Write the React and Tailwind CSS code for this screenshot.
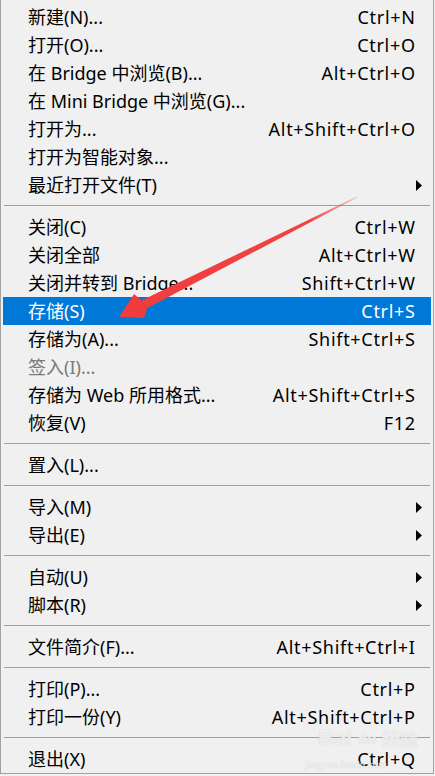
import React from "react";

const groups = [
  [
    { l: "新建(N)...", r: "Ctrl+N" },
    { l: "打开(O)...", r: "Ctrl+O" },
    { l: "在 Bridge 中浏览(B)...", r: "Alt+Ctrl+O" },
    { l: "在 Mini Bridge 中浏览(G)..." },
    { l: "打开为...", r: "Alt+Shift+Ctrl+O" },
    { l: "打开为智能对象..." },
    { l: "最近打开文件(T)", sub: true },
  ],
  [
    { l: "关闭(C)", r: "Ctrl+W" },
    { l: "关闭全部", r: "Alt+Ctrl+W" },
    { l: "关闭并转到 Bridge...", r: "Shift+Ctrl+W" },
    { l: "存储(S)", r: "Ctrl+S", active: true },
    { l: "存储为(A)...", r: "Shift+Ctrl+S" },
    { l: "签入(I)...", disabled: true },
    { l: "存储为 Web 所用格式...", r: "Alt+Shift+Ctrl+S" },
    { l: "恢复(V)", r: "F12" },
  ],
  [{ l: "置入(L)..." }],
  [
    { l: "导入(M)", sub: true },
    { l: "导出(E)", sub: true },
  ],
  [
    { l: "自动(U)", sub: true },
    { l: "脚本(R)", sub: true },
  ],
  [{ l: "文件简介(F)...", r: "Alt+Shift+Ctrl+I" }],
  [
    { l: "打印(P)...", r: "Ctrl+P" },
    { l: "打印一份(Y)", r: "Alt+Shift+Ctrl+P" },
  ],
  [{ l: "退出(X)", r: "Ctrl+Q" }],
];

function Row({ it }) {
  const cls = it.active
    ? "bg-[#0078d7] text-white"
    : it.disabled
    ? "text-[#7a7a7a]"
    : "text-black";
  return (
    <div className={`flex h-[28px] items-center pl-[25px] pr-[16px] ${cls}`}>
      <span className="flex-1 whitespace-nowrap">{it.l}</span>
      {it.r && (
        <span className="mr-[-0.7px] whitespace-nowrap tracking-[0.7px]">{it.r}</span>
      )}
      {it.sub && (
        <svg width="6" height="11" viewBox="0 0 6 11" className="mr-[-7px]">
          <path d="M0 0 L6 5.5 L0 11 Z" fill="#000" />
        </svg>
      )}
    </div>
  );
}

export default function App() {
  return (
    <div className="relative h-[776px] w-[435px] overflow-hidden bg-[#f0f0f0] font-['Noto_Sans','Noto_Sans_CJK_SC',sans-serif] text-[18px] leading-none">
      <div className="h-[774px] w-[434px] border-b border-l border-r border-[#a0a0a0] bg-[#f0f0f0] px-[2px] pt-[3px]">
        {groups.map((g, gi) => (
          <div key={gi}>
            {gi > 0 && (
              <div className="flex h-[14px] flex-col pt-[6px]">
                <div className="mx-[1px] h-px bg-[#a0a0a0]" />
              </div>
            )}
            {g.map((it, i) => (
              <Row key={i} it={it} />
            ))}
          </div>
        ))}
      </div>

      {/* red annotation arrow */}
      <svg
        className="pointer-events-none absolute inset-0"
        width="435"
        height="776"
        viewBox="0 0 435 776"
      >
        <defs>
          <linearGradient id="ag" x1="357" y1="197" x2="119" y2="317" gradientUnits="userSpaceOnUse">
            <stop offset="0" stopColor="#f24a4a" stopOpacity="0.25" />
            <stop offset="0.2" stopColor="#f24242" stopOpacity="1" />
            <stop offset="1" stopColor="#f03c3c" />
          </linearGradient>
        </defs>
        <polygon points="357.3,197.5 356.7,196.5 141.5,300.5 146.5,308.5" fill="url(#ag)" />
        <polygon points="119,317 144,318 147,309 141,300 134,294" fill="#f03c3c" />
      </svg>

      {/* watermark */}
      <div className="pointer-events-none absolute left-[318px] top-[727px] flex items-end gap-[2px] font-['Liberation_Sans','Noto_Sans_CJK_SC',sans-serif] font-bold text-white/70 [text-shadow:0_0_1px_#c4c4c4]">
        <span className="text-[22px]">Bai</span>
        <span className="flex h-[22px] w-[26px] items-center justify-center rounded-full text-[15px]">du</span>
        <span className="text-[18px]">经验</span>
      </div>
      <div className="pointer-events-none absolute left-[305px] top-[759px] font-['Liberation_Serif',serif] text-[11px] text-white/60 [text-shadow:0_0_1px_#c8c8c8]">
        jingyan.baidu.com
      </div>
    </div>
  );
}
